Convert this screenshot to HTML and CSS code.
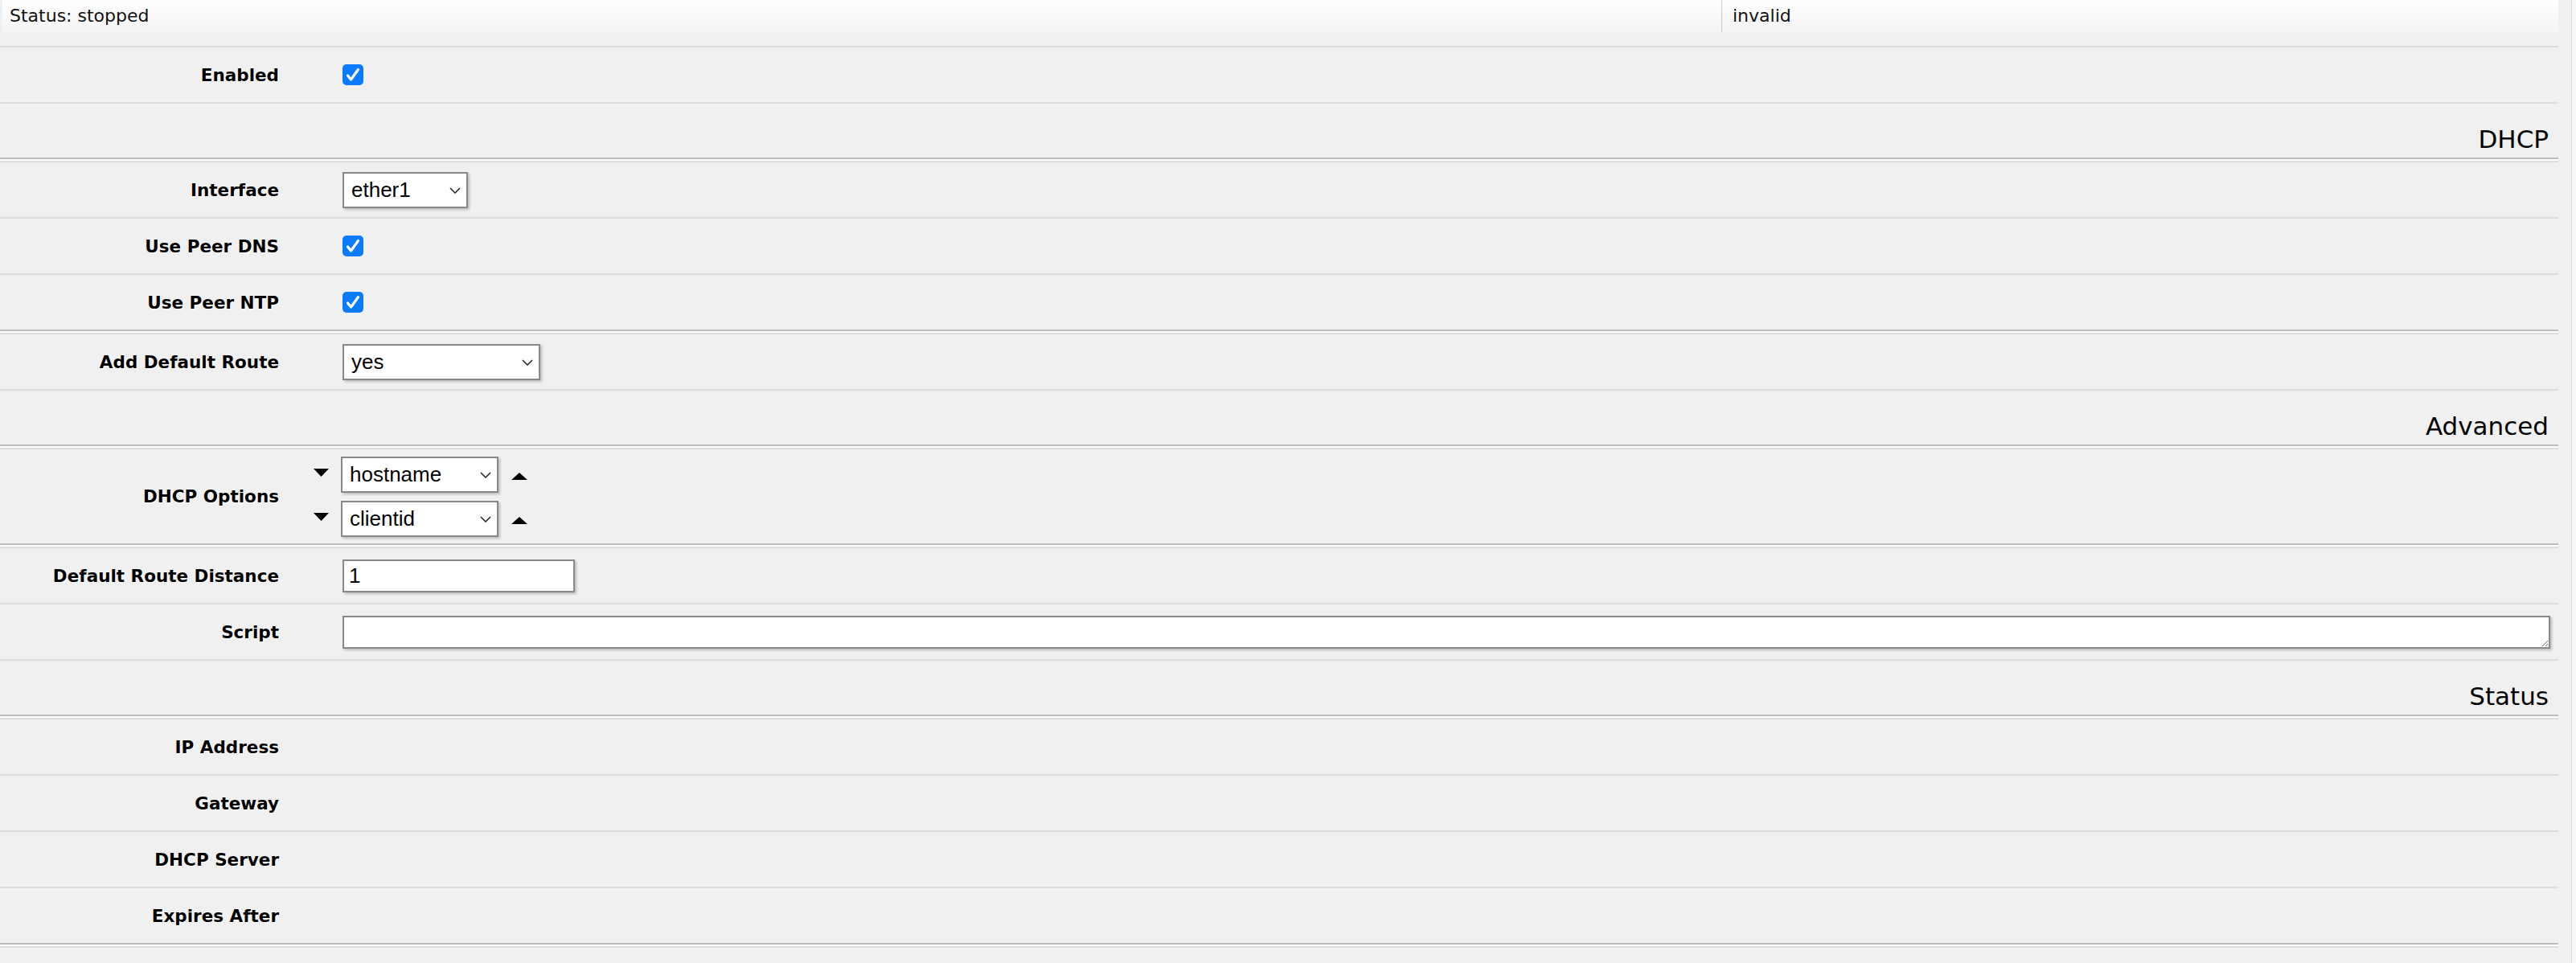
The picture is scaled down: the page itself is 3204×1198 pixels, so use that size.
FILE: index.html
```html
<!DOCTYPE html>
<html lang="en">
<head>
    <meta charset="UTF-8">
    <title>DHCP Client</title>
    <link rel="stylesheet" href="styles.css">
</head>
<body>

    <div class="statusbar">
        <div class="status-cell status-main">Status: stopped</div>
        <div class="status-cell">invalid</div>
    </div>

    <form class="form">
        <div class="row">
            <label class="label">Enabled</label>
            <div class="value">
                <span class="check"><svg width="26" height="26" viewBox="0 0 26 26"><polyline points="6.5,14 10.5,19 19.5,6.5" fill="none" stroke="#fff" stroke-width="3.2" stroke-linecap="round" stroke-linejoin="round"/></svg></span>
            </div>
        </div>

        <div class="row section"><h2>DHCP</h2></div>
        <div class="sep"></div>

        <div class="row">
            <label class="label" for="iface">Interface</label>
            <div class="value">
                <span class="select">
                    <select id="iface" class="w-iface"><option>ether1</option></select>
                    <svg width="14" height="8" viewBox="0 0 14 8"><polyline points="1,1 7,7 13,1" fill="none" stroke="#222" stroke-width="1.5"/></svg>
                </span>
            </div>
        </div>
        <div class="row">
            <label class="label">Use Peer DNS</label>
            <div class="value">
                <span class="check"><svg width="26" height="26" viewBox="0 0 26 26"><polyline points="6.5,14 10.5,19 19.5,6.5" fill="none" stroke="#fff" stroke-width="3.2" stroke-linecap="round" stroke-linejoin="round"/></svg></span>
            </div>
        </div>
        <div class="row">
            <label class="label">Use Peer NTP</label>
            <div class="value">
                <span class="check"><svg width="26" height="26" viewBox="0 0 26 26"><polyline points="6.5,14 10.5,19 19.5,6.5" fill="none" stroke="#fff" stroke-width="3.2" stroke-linecap="round" stroke-linejoin="round"/></svg></span>
            </div>
        </div>
        <div class="sep"></div>

        <div class="row">
            <label class="label" for="defroute">Add Default Route</label>
            <div class="value">
                <span class="select">
                    <select id="defroute" class="w-route"><option>yes</option><option>no</option><option>special-classless</option></select>
                    <svg width="14" height="8" viewBox="0 0 14 8"><polyline points="1,1 7,7 13,1" fill="none" stroke="#222" stroke-width="1.5"/></svg>
                </span>
            </div>
        </div>

        <div class="row section"><h2>Advanced</h2></div>
        <div class="sep"></div>

        <div class="row options">
            <label class="label">DHCP Options</label>
            <div class="value">
                <div class="option-list">
                    <div class="option">
                        <svg class="tri-down" width="19" height="10" viewBox="0 0 19 10"><polygon points="0,0 19,0 9.5,10"/></svg>
                        <span class="select">
                            <select class="w-option"><option>hostname</option></select>
                            <svg width="14" height="8" viewBox="0 0 14 8"><polyline points="1,1 7,7 13,1" fill="none" stroke="#222" stroke-width="1.5"/></svg>
                        </span>
                        <svg class="tri-up" width="20" height="9" viewBox="0 0 20 9"><polygon points="10,0 20,9 0,9"/></svg>
                    </div>
                    <div class="option">
                        <svg class="tri-down" width="19" height="10" viewBox="0 0 19 10"><polygon points="0,0 19,0 9.5,10"/></svg>
                        <span class="select">
                            <select class="w-option"><option>clientid</option></select>
                            <svg width="14" height="8" viewBox="0 0 14 8"><polyline points="1,1 7,7 13,1" fill="none" stroke="#222" stroke-width="1.5"/></svg>
                        </span>
                        <svg class="tri-up" width="20" height="9" viewBox="0 0 20 9"><polygon points="10,0 20,9 0,9"/></svg>
                    </div>
                </div>
            </div>
        </div>
        <div class="sep"></div>

        <div class="row">
            <label class="label" for="distance">Default Route Distance</label>
            <div class="value"><input type="text" id="distance" class="text" value="1" autocomplete="off"></div>
        </div>
        <div class="row">
            <label class="label" for="script">Script</label>
            <div class="value"><textarea id="script" class="script"></textarea></div>
        </div>

        <div class="row section"><h2>Status</h2></div>
        <div class="sep"></div>

        <div class="row">
            <label class="label">IP Address</label>
            <div class="value"></div>
        </div>
        <div class="row">
            <label class="label">Gateway</label>
            <div class="value"></div>
        </div>
        <div class="row">
            <label class="label">DHCP Server</label>
            <div class="value"></div>
        </div>
        <div class="row">
            <label class="label">Expires After</label>
            <div class="value"></div>
        </div>
        <div class="sep"></div>
    </form>

</body>
</html>
```

FILE: styles.css
```css
* {
    box-sizing: border-box;
}

html {
    background: #f8f8f8;
}

body {
    margin: 0 5px 0 0;
    padding-right: 16px;
    min-height: 100vh;
    background: #f0f0f0;
    border-right: 1px solid #d6d6d6;
    font-family: Verdana, "DejaVu Sans", sans-serif;
    color: #000;
}

.statusbar {
    display: flex;
    height: 40px;
    margin: 0 0 0 3px;
    background: linear-gradient(#fff, #f4f4f4);
    font-size: 22px;
    line-height: 40px;
    color: #111;
}

.status-cell {
    padding: 0 13px;
}

.status-main {
    flex: 0 0 2139px;
    padding-left: 9px;
    border-right: 1px solid #c8c8c8;
}

.form {
    margin: 17px 0 0;
}

.row {
    display: grid;
    grid-template-columns: 347px 1fr;
    column-gap: 79px;
    align-items: center;
    height: 70px;
    border-top: 2px solid #dcdcdc;
}

.sep + .row {
    height: 68px;
    border-top: 0;
}

.sep {
    height: 6px;
    background: #fff;
    border-top: 2px solid #bbb;
    border-bottom: 2px solid #dcdcdc;
}

.section {
    display: flex;
    justify-content: flex-end;
    align-items: flex-end;
    height: 69px;
}

.section h2 {
    margin: 0;
    padding: 0 12px 5px;
    font-size: 31px;
    font-weight: normal;
}

.sep + .row.options {
    height: 117px;
}

.label {
    display: block;
    text-align: right;
    font-size: 21.5px;
    font-weight: bold;
    text-shadow: 1px 1px 0 #fff;
}

.value {
    display: flex;
    align-items: center;
    padding-right: 10px;
}

.check {
    display: block;
    width: 26px;
    height: 26px;
    border-radius: 5px;
    background: #0a7bff;
}

.check svg {
    display: block;
}

.select {
    position: relative;
    display: inline-block;
}

.select select {
    display: block;
    -webkit-appearance: none;
    appearance: none;
    height: 45px;
    padding: 0 36px 0 9px;
    border: 2px solid #888;
    border-radius: 0;
    background: #fff;
    color: #000;
    font-family: "Liberation Sans", Arial, sans-serif;
    font-size: 26px;
    box-shadow: 2px 2px 3px rgba(0, 0, 0, .22);
}

.select svg {
    position: absolute;
    right: 9px;
    top: 19px;
    pointer-events: none;
}

.w-iface {
    width: 156px;
}

.w-route {
    width: 246px;
}

.w-option {
    width: 196px;
}

.option-list {
    display: flex;
    flex-direction: column;
    gap: 10px;
    margin-left: -36px;
}

.option {
    display: flex;
    align-items: center;
}

.tri-down {
    margin: 0 15px 5px 0;
}

.tri-up {
    margin: 5px 0 0 16px;
}

.text,
.script {
    height: 41px;
    padding: 0 6px;
    border: 2px solid #888;
    border-radius: 0;
    background: #fff;
    color: #000;
    font-family: "Liberation Sans", Arial, sans-serif;
    font-size: 26px;
    box-shadow: 2px 2px 3px rgba(0, 0, 0, .22);
}

.text {
    width: 289px;
}

.script {
    display: block;
    width: 100%;
    min-height: 41px;
    padding-top: 3px;
    resize: both;
    overflow: auto;
}
```
